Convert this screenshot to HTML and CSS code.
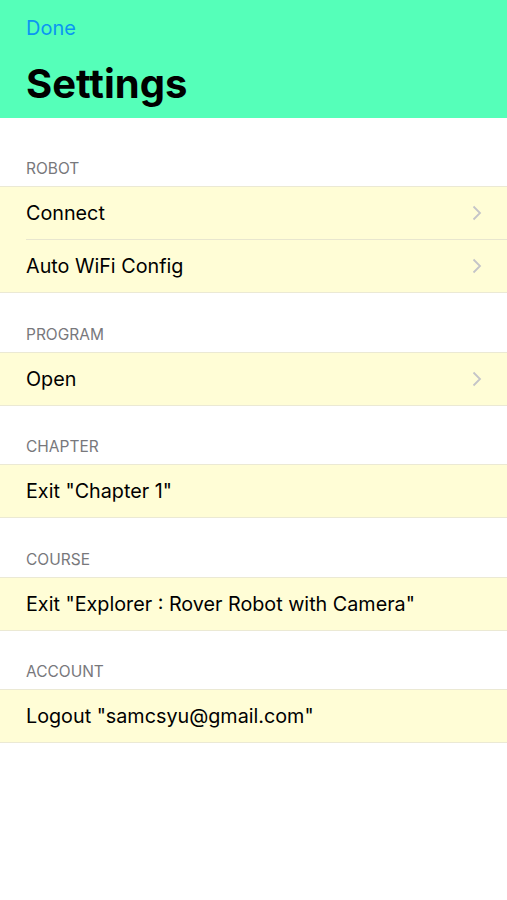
FILE: index.html
```html
<!DOCTYPE html>
<html>
<head>
<meta charset="utf-8">
<link rel="stylesheet" href="styles.css">
</head>
<body>
<header class="nav">
  <div class="done">Done</div>
  <h1 class="title">Settings</h1>
</header>
<main class="list">
  <section class="section first">
    <div class="section-label">ROBOT</div>
    <div class="group">
      <div class="row"><span class="row-text">Connect</span><svg class="chev" viewBox="0 0 12 16"><path d="M2.5 1.5l6.5 6.5-6.5 6.5"/></svg></div>
      <div class="row"><span class="row-text">Auto WiFi Config</span><svg class="chev" viewBox="0 0 12 16"><path d="M2.5 1.5l6.5 6.5-6.5 6.5"/></svg></div>
    </div>
  </section>
  <section class="section">
    <div class="section-label">PROGRAM</div>
    <div class="group">
      <div class="row"><span class="row-text">Open</span><svg class="chev" viewBox="0 0 12 16"><path d="M2.5 1.5l6.5 6.5-6.5 6.5"/></svg></div>
    </div>
  </section>
  <section class="section">
    <div class="section-label">CHAPTER</div>
    <div class="group">
      <div class="row"><span class="row-text">Exit "Chapter 1"</span></div>
    </div>
  </section>
  <section class="section">
    <div class="section-label">COURSE</div>
    <div class="group">
      <div class="row"><span class="row-text">Exit "Explorer : Rover Robot with Camera"</span></div>
    </div>
  </section>
  <section class="section">
    <div class="section-label">ACCOUNT</div>
    <div class="group">
      <div class="row"><span class="row-text">Logout "samcsyu@gmail.com"</span></div>
    </div>
  </section>
</main>
</body>
</html>
```
FILE: styles.css
```css
* { box-sizing: border-box; }
html, body { margin: 0; padding: 0; }
body {
  width: 507px;
  height: 900px;
  background: #ffffff;
  font-family: Inter, "Liberation Sans", sans-serif;
  color: #000;
}
.nav {
  background: #55ffb9;
  height: 118px;
  padding: 16px 26px 0;
}
.done {
  color: #0a96f2;
  font-size: 20px;
  line-height: 24px;
}
.title {
  margin: 20px 0 0;
  font-size: 40px;
  font-weight: 700;
  line-height: 48px;
  letter-spacing: 0;
}
.section-label {
  height: 58.5px;
  display: flex;
  align-items: flex-end;
  padding: 0 26px 7px;
  font-size: 15.5px;
  line-height: 20px;
  color: #78787c;
}
.section.first .section-label { height: 68px; }
.group {
  background: #fffdd6;
  border-top: 1px solid #ebe9d4;
  border-bottom: 1px solid #ebe9d4;
}
.row {
  height: 52px;
  margin-left: 26px;
  display: flex;
  align-items: center;
  justify-content: space-between;
  padding: 0 24px 0 0;
}
.row + .row { border-top: 1px solid #e8e6cf; height: 53px; }
.row-text {
  font-size: 19.75px;
  line-height: 24px;
}
.chev {
  width: 12px;
  height: 16px;
  fill: none;
  stroke: #c4c4c8;
  stroke-width: 1.8;
}
```
